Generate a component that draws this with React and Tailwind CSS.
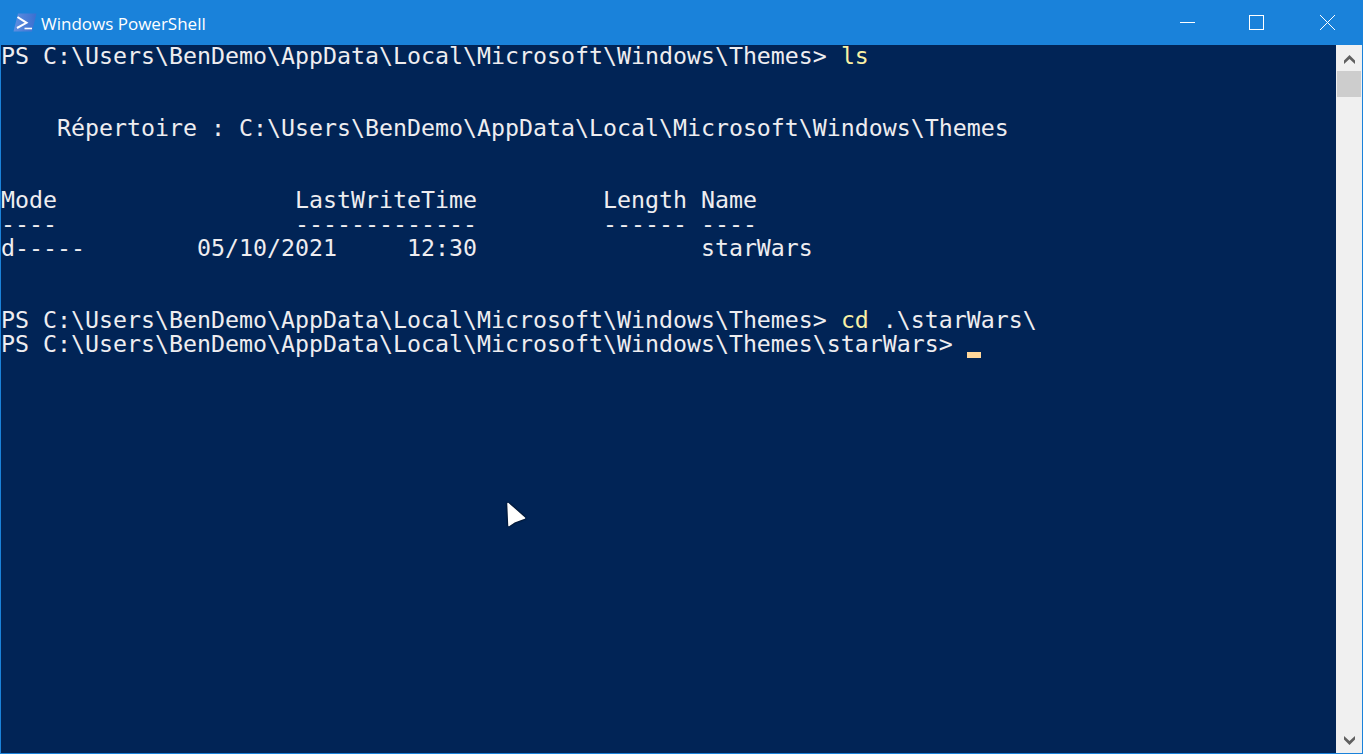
const lines = [
  [["PS C:\\Users\\BenDemo\\AppData\\Local\\Microsoft\\Windows\\Themes> "], ["ls", true]],
  [],
  [],
  [["    Répertoire : C:\\Users\\BenDemo\\AppData\\Local\\Microsoft\\Windows\\Themes"]],
  [],
  [],
  [["Mode                 LastWriteTime         Length Name"]],
  [["----                 -------------         ------ ----"]],
  [["d-----        05/10/2021     12:30                starWars"]],
  [],
  [],
  [["PS C:\\Users\\BenDemo\\AppData\\Local\\Microsoft\\Windows\\Themes> "], ["cd", true], [" .\\starWars\\"]],
];

function PsIcon() {
  return (
    <svg width="24" height="19" viewBox="0 0 24 19" className="shrink-0">
      <defs>
        <linearGradient id="ps" x1="0" y1="0" x2="1" y2="0">
          <stop offset="0" stopColor="#5f8fe0" />
          <stop offset="1" stopColor="#3a6fd0" />
        </linearGradient>
      </defs>
      <path d="M5 0.5H23.5L19 18.5H0.5Z" fill="url(#ps)" />
      <path d="M4.5 4L13.5 9.8L4 15" fill="none" stroke="#ffffff" strokeWidth="2" />
      <path d="M11.5 15.5H19" fill="none" stroke="#ffffff" strokeWidth="1.6" />
    </svg>
  );
}

function WindowButtons() {
  return (
    <div className="flex h-full">
      <button className="flex h-full w-[67px] items-center justify-center">
        <span className="h-px w-[15px] bg-white" />
      </button>
      <button className="flex h-full w-[71px] items-center justify-center">
        <span className="h-[15px] w-[15px] border border-white" />
      </button>
      <button className="flex h-full w-[71px] items-center justify-center">
        <svg width="15" height="15" viewBox="0 0 15 15">
          <path d="M0 0L15 15M15 0L0 15" stroke="#ffffff" strokeWidth="1" fill="none" />
        </svg>
      </button>
    </div>
  );
}

function Chevron({ down }) {
  return (
    <svg width="11" height="9" viewBox="0 0 11 9">
      <polygon
        points={down ? "5.5,9 11,3.5 11,0 5.5,5 0,0 0,3.5" : "5.5,0 11,5.5 11,9 5.5,4 0,9 0,5.5"}
        fill="#606060"
      />
    </svg>
  );
}

export default function App() {
  return (
    <div className="flex h-[754px] w-[1363px] flex-col overflow-hidden bg-[#1a82da]">
      <header className="flex h-[45px] shrink-0 items-center justify-between">
        <div className="flex items-center pl-[13px]">
          <PsIcon />
          <span className="ml-[4px] pt-[2px] font-['Open_Sans',sans-serif] text-[17px] leading-none text-white">
            Windows PowerShell
          </span>
        </div>
        <WindowButtons />
      </header>
      <main className="mx-px mb-px flex min-h-0 flex-1">
        <div className="relative flex-1 bg-[#012456] font-['DejaVu_Sans_Mono',monospace] text-[23.25px] text-[#eeedf0]">
          {lines.map((segs, i) => (
            <div key={i} className="h-6 whitespace-pre leading-[22px]">
              {segs.map(([t, y], j) => (
                <span key={j} className={y ? "text-[#f9f1a5]" : undefined}>{t}</span>
              ))}
            </div>
          ))}
          <div className="h-6 whitespace-pre leading-[22px]">
            PS C:\Users\BenDemo\AppData\Local\Microsoft\Windows\Themes\starWars&gt; <span className="inline-block h-[6px] w-[14px] bg-[#ffd79a] align-[-6px]" />
          </div>
          <svg width="24" height="30" viewBox="0 0 24 30" className="absolute left-[504px] top-[455px] drop-shadow-[0_0_1px_#000000]">
            <path d="M3 3.5L19.5 18L10 21.5L4 25.5Z" fill="#ffffff" stroke="#ffffff" strokeWidth="1.5" strokeLinejoin="round" />
          </svg>
        </div>
        <aside className="flex w-[26px] shrink-0 flex-col items-center bg-[#f0f0f0]">
          <div className="flex h-[26px] w-full items-center justify-center pt-[3px]"><Chevron /></div>
          <div className="h-[26px] w-[24px] bg-[#cdcdcd]" />
          <div className="flex-1" />
          <div className="flex h-[26px] w-full items-center justify-center"><Chevron down /></div>
        </aside>
      </main>
    </div>
  );
}
